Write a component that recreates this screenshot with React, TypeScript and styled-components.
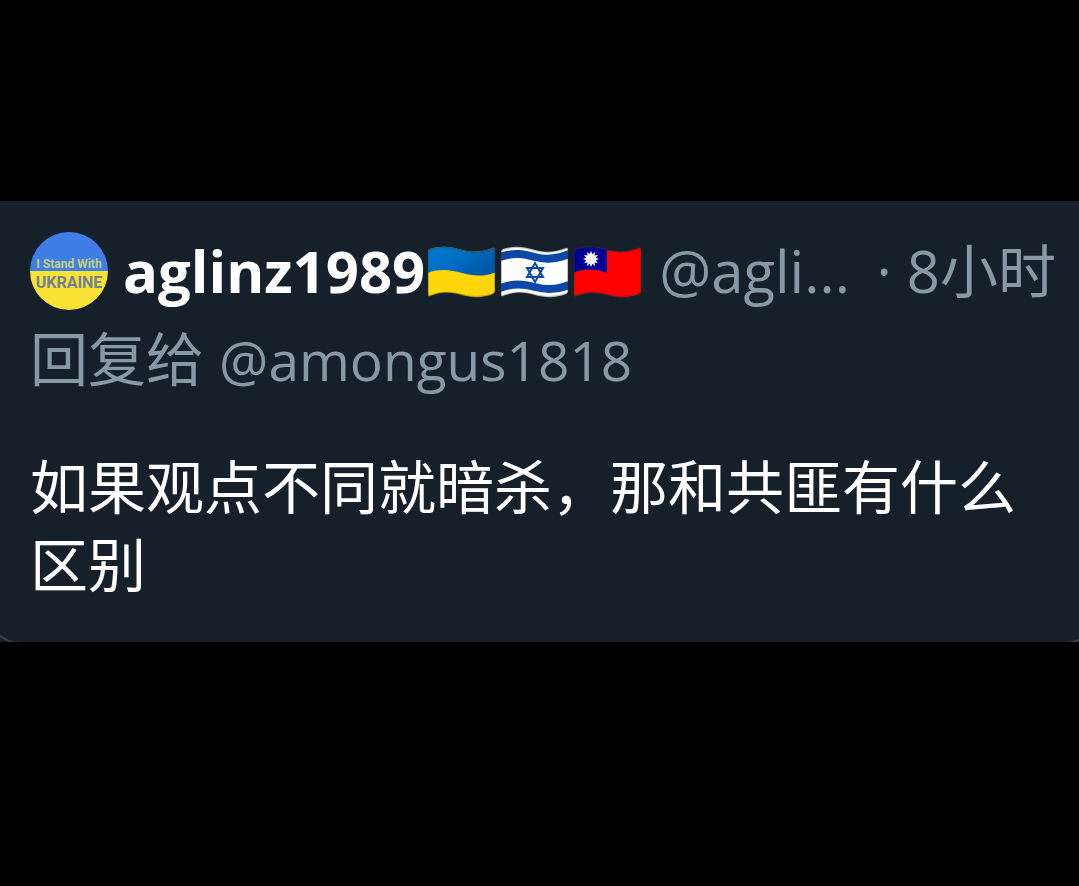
import React from "react";
import styled, { createGlobalStyle } from "styled-components";

const GlobalStyle = createGlobalStyle`
  *, *::before, *::after { box-sizing: border-box; }
  body {
    margin: 0;
    background: #000;
    font-family: "Open Sans", "Noto Sans CJK SC", sans-serif;
  }
`;

const Page = styled.main`
  min-height: 100vh;
  padding: 201px 0;
  background: #000;
`;

const Frame = styled.div`
  overflow: hidden;
  background: #16202a;
`;

const Card = styled.article`
  margin: 0 -18px -2px -12px;
  padding: 30px 39px 38px 40px;
  border: 2px solid #36414b;
  border-top: 0;
  border-radius: 0 0 32px 32px;
`;

const Header = styled.header`
  display: flex;
  align-items: center;
  height: 80px;
  color: #8899a6;
  font-size: 58px;
  line-height: 80px;
  white-space: nowrap;
`;

const Avatar = styled.svg`
  flex: none;
  width: 78px;
  height: 78px;
  margin-right: 15px;
`;

const Name = styled.h1`
  margin: 0;
  color: #fff;
  font-size: 58px;
  font-weight: 700;
  line-height: 80px;
`;

const Flags = styled.span`
  display: flex;
  flex: none;
  gap: 4px;
  padding-top: 2px;
  margin: 0 17px 0 2px;
`;

const FlagIcon = styled.svg`
  display: block;
  width: 69px;
  height: 52px;
`;

const Handle = styled.a`
  color: inherit;
  text-decoration: none;
`;

const Mention = styled(Handle)`
  font-size: 55px;
`;

const Time = styled.time`
  margin-left: auto;
`;

const Reply = styled.p`
  margin: 8px 0 0;
  color: #8899a6;
  font-size: 58px;
  line-height: 80px;
`;

const Body = styled.p`
  margin: 48px 0 0;
  color: #fff;
  font-size: 58px;
  line-height: 78px;
`;

const wave =
  "M1 6 Q1 4 3 3 C15 -1 25 1 35 4 C46 7 56 6 66 2 Q68 1 68 4 V45 Q68 47 66 48 C56 52 46 52 35 49 C25 46 15 45 3 50 Q1 51 1 48 Z";

type FlagProps = { id: string; label: string; children: React.ReactNode };

function Flag({ id, label, children }: FlagProps) {
  return (
    <FlagIcon viewBox="0 0 69 52" role="img" aria-label={label}>
      <defs>
        <clipPath id={id}>
          <path d={wave} />
        </clipPath>
        <linearGradient id={`${id}-shade`} x1="0" y1="0" x2="1" y2="0.5">
          <stop offset="0" stopColor="#0077d0" />
          <stop offset="0.5" stopColor="#0070c4" />
          <stop offset="1" stopColor="#0057a8" />
        </linearGradient>
      </defs>
      <g clipPath={`url(#${id})`}>{children}</g>
      <path d={wave} fill="none" stroke="#333" strokeOpacity="0.3" strokeWidth="2" />
    </FlagIcon>
  );
}

const rays = Array.from({ length: 12 }, (_, i) => i * 30);

export default function App() {
  return (
    <>
      <GlobalStyle />
      <Page>
        <Frame>
          <Card>
            <Header>
              <Avatar viewBox="0 0 78 78" role="img" aria-label="I Stand With Ukraine">
                <defs>
                  <clipPath id="avatar">
                    <circle cx="39" cy="39" r="39" />
                  </clipPath>
                </defs>
                <g clipPath="url(#avatar)">
                  <rect width="78" height="39" fill="#3f7ee6" />
                  <rect y="39" width="78" height="39" fill="#fbe134" />
                </g>
                <g fontFamily="Roboto, sans-serif" fontWeight="700" textAnchor="middle">
                  <text x="39" y="36" fontSize="12" fill="#c6cf7c">
                    I Stand With
                  </text>
                  <text x="39" y="56" fontSize="16" fill="#6f8295">
                    UKRAINE
                  </text>
                </g>
              </Avatar>
              <Name>aglinz1989</Name>
              <Flags>
                <Flag id="ukraine" label="乌克兰">
                  <rect width="69" height="52" fill="#ffd60a" />
                  <path
                    d="M0 0 H69 V26 C57 31 46 30 35 27 C24 24 13 22 0 27 Z"
                    fill="url(#ukraine-shade)"
                  />
                </Flag>
                <Flag id="israel" label="以色列">
                  <rect width="69" height="52" fill="#fff" />
                  <g fill="none" stroke="#0d47a8">
                    <path d="M0 11 C14 6 24 8 35 11 C46 14 57 13 69 8" strokeWidth="8" />
                    <path d="M0 42 C14 37 24 38 35 41 C46 44 57 44 69 39" strokeWidth="8" />
                    <path d="M35 17 L43 31 H27 Z M35 36 L43 22 H27 Z" strokeWidth="2" />
                  </g>
                </Flag>
                <Flag id="taiwan" label="台湾">
                  <rect width="69" height="52" fill="#fe0000" />
                  <path d="M0 0 H34 V27 C23 23 12 22 0 27 Z" fill="#000095" />
                  <g fill="#fff">
                    {rays.map((angle) => (
                      <path
                        key={angle}
                        d="M18 5 L20 10 H16 Z"
                        transform={`rotate(${angle} 18 13)`}
                      />
                    ))}
                    <circle cx="18" cy="13" r="4" />
                  </g>
                </Flag>
              </Flags>
              <Handle href="#profile">@agli...</Handle>
              <Time>· 8小时</Time>
            </Header>
            <Reply>
              回复给 <Mention href="#amongus1818">@amongus1818</Mention>
            </Reply>
            <Body>如果观点不同就暗杀，那和共匪有什么区别</Body>
          </Card>
        </Frame>
      </Page>
    </>
  );
}
